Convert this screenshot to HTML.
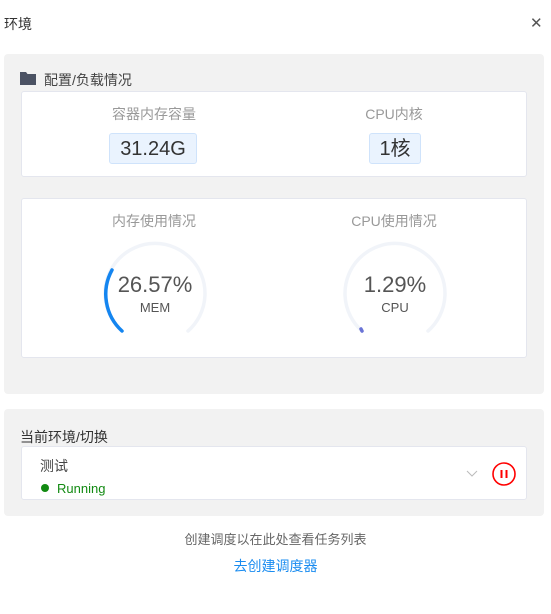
<!DOCTYPE html><html><head><meta charset="utf-8"><style>
*{margin:0;padding:0;box-sizing:border-box}
body{width:551px;height:614px;background:#fff;font-family:"Liberation Sans","Noto Sans CJK SC",sans-serif;position:relative;overflow:hidden;color:#333}
.a{position:absolute;line-height:1}
.panel{background:#f2f2f2;border-radius:4px}
.card{background:#fff;border:1px solid #e4e6ee;border-radius:3px}
.lbl{color:#999;font-size:14px;text-align:center;width:200px}
.tag{background:#eaf3fe;border:1px solid #cfe3fb;border-radius:3px;font-size:20px;color:#333;text-align:center;line-height:31px}
</style></head><body>
<div class="a" style="left:4px;top:17px;font-size:14px;color:#333">环境</div>
<div class="a" style="left:530px;top:16px;font-size:15px;color:#555">✕</div>
<div class="a panel" style="left:4px;top:54px;width:540px;height:340px"></div>
<svg class="a" style="left:20px;top:72px" width="16" height="13"><path d="M0 0h6l1.5 2H16v11H0z" fill="#4b5263"/></svg>
<div class="a" style="left:44px;top:73px;font-size:14px;color:#444">配置/负载情况</div>
<div class="a card" style="left:21px;top:91px;width:506px;height:86px"></div>
<div class="a lbl" style="left:54px;top:107px">容器内存容量</div>
<div class="a lbl" style="left:294px;top:107px">CPU内核</div>
<div class="a tag" style="left:109px;top:133px;width:88px;height:31px">31.24G</div>
<div class="a tag" style="left:369px;top:133px;width:52px;height:31px">1核</div>
<div class="a card" style="left:21px;top:198px;width:506px;height:160px"></div>
<div class="a lbl" style="left:54px;top:214px">内存使用情况</div>
<div class="a lbl" style="left:294px;top:214px">CPU使用情况</div>
<svg class="a" style="left:0;top:0" width="551" height="614" fill="none" stroke-width="3.5" stroke-linecap="round">
<path d="M122 331 A50 50 0 1 1 188 331" stroke="#f1f4f9"/>
<path d="M122 331 A50 50 0 0 1 112 270" stroke="#1485f0"/>
<path d="M362 331 A50 50 0 1 1 428 331" stroke="#f1f4f9"/>
<path d="M361 329 L362 331" stroke="#6a74d6"/>
</svg>
<div class="a" style="left:105px;top:274px;width:100px;text-align:center;font-size:22px;color:#555">26.57%</div>
<div class="a" style="left:105px;top:301px;width:100px;text-align:center;font-size:13px;color:#555">MEM</div>
<div class="a" style="left:345px;top:274px;width:100px;text-align:center;font-size:22px;color:#555">1.29%</div>
<div class="a" style="left:345px;top:301px;width:100px;text-align:center;font-size:13px;color:#555">CPU</div>
<div class="a panel" style="left:4px;top:409px;width:540px;height:107px"></div>
<div class="a" style="left:20px;top:430px;font-size:14px;color:#333">当前环境/切换</div>
<div class="a card" style="left:21px;top:446px;width:506px;height:54px"></div>
<div class="a" style="left:40px;top:459px;font-size:14px;color:#444">测试</div>
<div class="a" style="left:41px;top:484px;width:8px;height:8px;border-radius:50%;background:#128a12"></div>
<div class="a" style="left:57px;top:482px;font-size:13px;color:#128a12">Running</div>
<svg class="a" style="left:466px;top:470px" width="12" height="8"><path d="M1 1l5 5 5-5" stroke="#bbb" fill="none"/></svg>
<svg class="a" style="left:490px;top:460px" width="28" height="28"><circle cx="14" cy="14" r="11" stroke="#f00" stroke-width="1.6" fill="none"/><path d="M11.5 10v8M16.5 10v8" stroke="#f00" stroke-width="2"/></svg>
<div class="a" style="left:0;top:533px;width:551px;text-align:center;font-size:13px;color:#666">创建调度以在此处查看任务列表</div>
<div class="a" style="left:0;top:559px;width:551px;text-align:center;font-size:14px;color:#1a8cf0">去创建调度器</div>
</body></html>
